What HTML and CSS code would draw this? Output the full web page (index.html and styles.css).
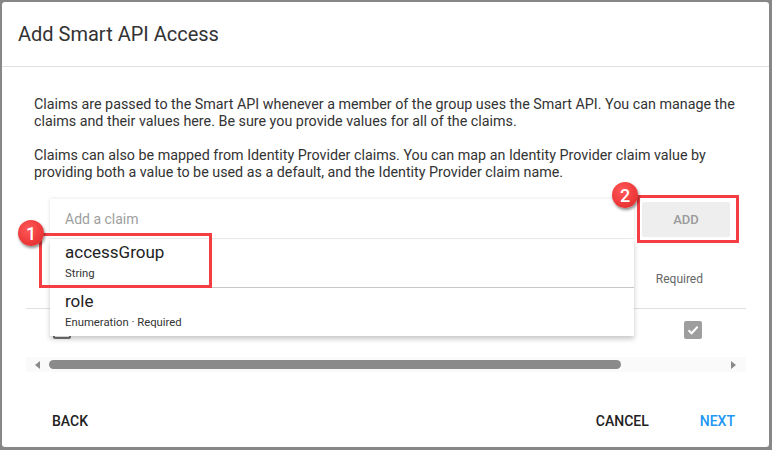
FILE: index.html
```html
<!DOCTYPE html>
<html>
<head>
<meta charset="utf-8">
<link rel="stylesheet" href="styles.css">
</head>
<body>
<div class="dialog">
  <div class="header"><h1 class="title">Add Smart API Access</h1></div>
  <div class="body">
    <p class="para">Claims are passed to the Smart API whenever a member of the group uses the Smart API. You can manage the claims and their values here. Be sure you provide values for all of the claims.</p>
    <p class="para">Claims can also be mapped from Identity Provider claims. You can map an Identity Provider claim value by providing both a value to be used as a default, and the Identity Provider claim name.</p>
    <div class="claim-row">
      <div class="combo">
        <div class="combo-input">Add a claim</div>
        <div class="menu">
          <div class="item">
            <div class="item-name">accessGroup</div>
            <div class="item-desc">String</div>
          </div>
          <div class="item item-sep">
            <div class="item-name">role</div>
            <div class="item-desc">Enumeration · Required</div>
          </div>
        </div>
      </div>
      <div class="add-btn">ADD</div>
      <div class="callout callout-1"></div>
      <div class="badge badge-1">1</div>
      <div class="callout callout-2"></div>
      <div class="badge badge-2">2</div>
    </div>
    <div class="table">
      <div class="thead"><span class="th">Required</span></div>
      <div class="trow">
        <span class="cb cb-empty"></span>
        <span class="cb cb-checked">
          <svg width="18" height="18" viewBox="0 0 18 18"><path d="M4.5 9.2 L7.6 12.2 L13.6 5.8" fill="none" stroke="#fff" stroke-width="2"/></svg>
        </span>
      </div>
    </div>
    <div class="scrollbar">
      <span class="arrow arrow-left"></span>
      <span class="thumb"></span>
      <span class="track-rest"></span>
      <span class="arrow arrow-right"></span>
    </div>
  </div>
  <div class="footer">
    <span class="btn btn-back">BACK</span>
    <span class="spacer"></span>
    <span class="btn btn-cancel">CANCEL</span>
    <span class="btn btn-next">NEXT</span>
  </div>
</div>
</body>
</html>
```

FILE: styles.css
```css
html, body {
  margin: 0;
  padding: 0;
}
body {
  background: #878787;
  font-family: Roboto, "Liberation Sans", Arial, sans-serif;
  color: #333;
  width: 772px;
  height: 450px;
  overflow: hidden;
}
.dialog {
  margin: 2px 3px 0 2px;
  width: 767px;
  height: 445px;
  background: #fff;
  border-radius: 3px;
  display: flex;
  flex-direction: column;
}
.header {
  height: 64px;
  border-bottom: 1px solid #e0e0e0;
  display: flex;
  align-items: center;
  padding: 0 16px;
}
.title {
  margin: 0;
  font-size: 20px;
  font-weight: 400;
  color: #333;
}
.body {
  flex: 1;
  padding: 29px 32px 0 32px;
  display: flex;
  flex-direction: column;
}
.para {
  margin: 0 0 17px 0;
  font-size: 14.3px;
  line-height: 17px;
  color: #333;
}
.para + .para {
  margin-bottom: 0;
}
.claim-row {
  position: relative;
  margin-top: 18px;
  display: flex;
  align-items: flex-start;
  padding-left: 16px;
  gap: 8px;
  height: 40px;
}
.combo {
  position: relative;
  width: 584px;
  z-index: 2;
}
.combo-input {
  height: 40px;
  box-sizing: border-box;
  padding: 0 15px;
  display: flex;
  align-items: center;
  font-size: 14px;
  color: #9e9e9e;
  background: #fff;
  border-bottom: 1px solid #eeeeee;
  box-shadow: 0 0 4px rgba(0,0,0,0.12);
}
.menu {
  position: absolute;
  top: 40px;
  left: 0;
  right: 0;
  background: #fff;
  box-shadow: 0 3px 5px rgba(0,0,0,0.22);
}
.item {
  height: 48px;
  box-sizing: border-box;
  padding: 4px 15px 0;
}
.item-sep {
  border-top: 1px solid #c8c8c8;
  height: 49px;
}
.item-name {
  font-size: 17px;
  line-height: 19px;
  color: #222;
}
.item-desc {
  margin-top: 5px;
  font-size: 11.3px;
  line-height: 14px;
  color: #333;
}
.add-btn {
  margin-top: 3px;
  width: 88px;
  height: 35px;
  background: #eeeeee;
  border-radius: 2px;
  display: flex;
  align-items: center;
  justify-content: center;
  font-size: 13px;
  color: #9a9a9a;
  font-weight: 500;
}
.callout {
  position: absolute;
  border: 3px solid #f43e43;
  box-sizing: border-box;
  z-index: 3;
}
.callout-1 {
  left: 5px;
  top: 34px;
  width: 173px;
  height: 55px;
}
.callout-2 {
  left: 603px;
  top: -4px;
  width: 102px;
  height: 48px;
}
.badge {
  position: absolute;
  width: 26px;
  height: 26px;
  border-radius: 50%;
  background: radial-gradient(circle at 40% 35%, #ff5a5a 0%, #ef3b3b 55%, #d42a2a 100%);
  box-shadow: 1px 2px 3px rgba(0,0,0,0.45);
  color: #fff;
  font-size: 18px;
  font-weight: 500;
  display: flex;
  align-items: center;
  justify-content: center;
  z-index: 4;
}
.badge-1 {
  left: -16px;
  top: 21px;
}
.badge-2 {
  left: 578px;
  top: -17px;
}
.table {
  margin: 11px -9px 0 -8px;
}
.thead {
  height: 58px;
  border-bottom: 1px solid #e0e0e0;
  display: flex;
  align-items: center;
  justify-content: flex-end;
  padding-right: 43px;
}
.th {
  font-size: 12px;
  color: #666;
}
.trow {
  height: 42px;
  display: flex;
  align-items: center;
  justify-content: space-between;
  padding: 0 44px 0 27px;
}
.cb {
  width: 18px;
  height: 18px;
  border-radius: 2px;
  box-sizing: border-box;
  display: block;
}
.cb-empty {
  border: 2px solid #757575;
}
.cb-checked {
  background: #9e9e9e;
}
.cb-checked svg {
  display: block;
}
.scrollbar {
  margin: 6px -9px 0 -8px;
  height: 15px;
  background: #fafafa;
  display: flex;
  align-items: center;
  padding: 0 10px 0 9px;
}
.arrow {
  width: 0;
  height: 0;
  border-top: 4px solid transparent;
  border-bottom: 4px solid transparent;
}
.arrow-left {
  border-right: 5px solid #8a8a8a;
}
.arrow-right {
  border-left: 5px solid #8a8a8a;
}
.thumb {
  margin-left: 9px;
  width: 572px;
  height: 9px;
  border-radius: 5px;
  background: #8a8a8a;
}
.track-rest {
  flex: 1;
}
.footer {
  height: 52px;
  display: flex;
  align-items: center;
  padding: 0 18px 0 34px;
}
.btn {
  padding: 0 16px;
  font-size: 14px;
  font-weight: 500;
  color: #222;
  line-height: 36px;
}
.btn-cancel {
  margin-right: 19px;
}
.btn-next {
  color: #2196f3;
}
.spacer {
  flex: 1;
}
```
